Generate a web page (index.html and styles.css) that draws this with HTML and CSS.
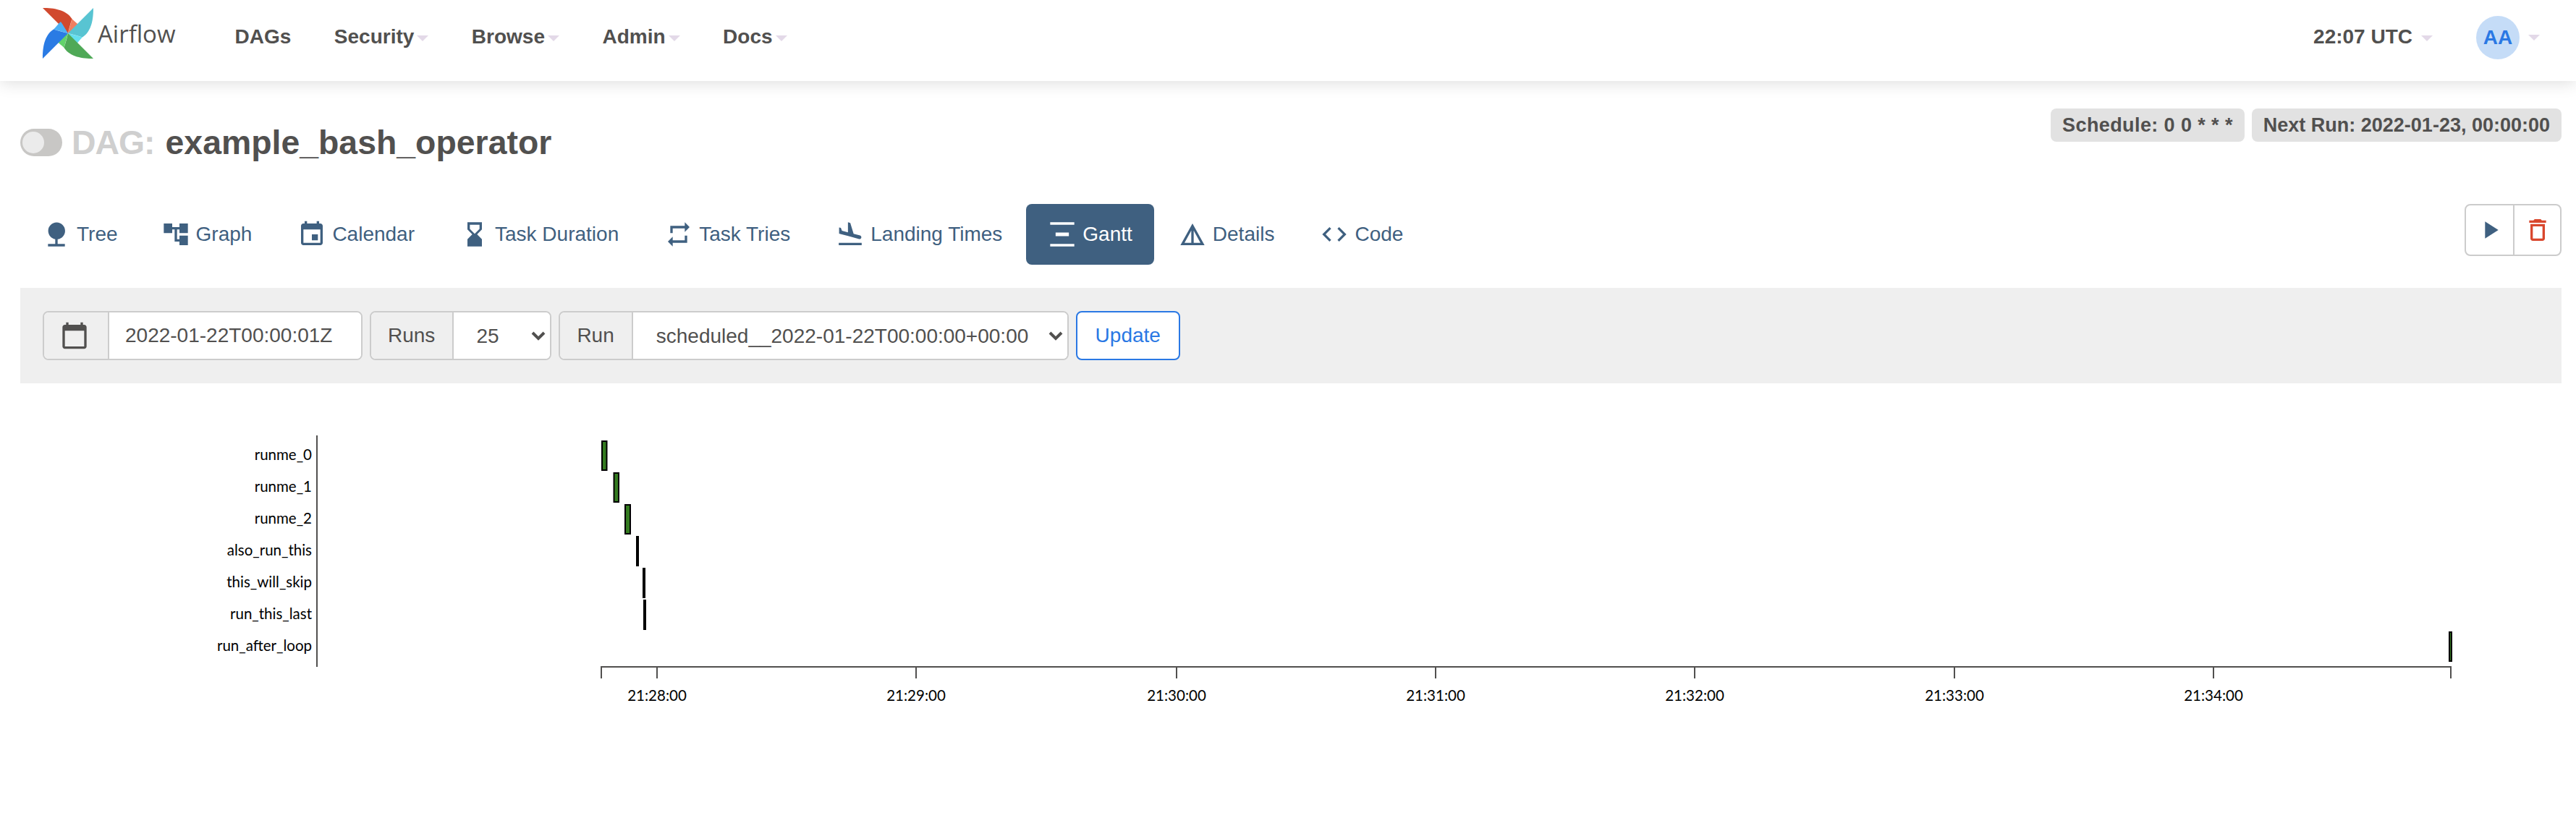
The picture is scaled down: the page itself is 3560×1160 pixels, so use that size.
FILE: index.html
```html
<!DOCTYPE html>
<html>
<head lang="en">
    <meta charset="UTF-8">
    <title>Airflow - example_bash_operator</title>
    <link rel="stylesheet" href="styles.css">
</head>
<body>
<nav class="navbar">
    <a class="brand" href="#">
        <svg class="brand-logo" viewBox="-36 -36 72 72">
            <g>
                <path fill="#f07f60" d="M5.5-20C8-17 13-14 16-10 10-6 5-3 0 0Z"/>
                <path fill="#d1492e" d="M-35-35C-20-35-3-33 5.5-20 3-12 1-5 0 0L-14-14Z"/>
            </g>
            <g transform="rotate(90)">
                <path fill="#64dfef" d="M5.5-20C8-17 13-14 16-10 10-6 5-3 0 0Z"/>
                <path fill="#58c4d2" d="M-35-35C-20-35-3-33 5.5-20 3-12 1-5 0 0L-14-14Z"/>
            </g>
            <g transform="rotate(180)">
                <path fill="#62d36b" d="M5.5-20C8-17 13-14 16-10 10-6 5-3 0 0Z"/>
                <path fill="#4fa957" d="M-35-35C-20-35-3-33 5.5-20 3-12 1-5 0 0L-14-14Z"/>
            </g>
            <g transform="rotate(270)">
                <path fill="#4db1f5" d="M5.5-20C8-17 13-14 16-10 10-6 5-3 0 0Z"/>
                <path fill="#2a7be4" d="M-35-35C-20-35-3-33 5.5-20 3-12 1-5 0 0L-14-14Z"/>
            </g>
        </svg>
        <span class="brand-name">Airflow</span>
    </a>
    <ul class="nav-menu">
        <li><a href="#">DAGs</a></li>
        <li><a href="#">Security<span class="caret"></span></a></li>
        <li><a href="#">Browse<span class="caret"></span></a></li>
        <li><a href="#">Admin<span class="caret"></span></a></li>
        <li><a href="#">Docs<span class="caret"></span></a></li>
    </ul>
    <div class="nav-right">
        <a class="clock" href="#">22:07 UTC<span class="caret"></span></a>
        <a class="user" href="#"><span class="avatar">AA</span><span class="caret"></span></a>
    </div>
</nav>

<main class="page">
    <div class="dag-header">
        <h3 class="dag-title">
            <span class="toggle"><span class="toggle-thumb"></span></span>
            <span class="dag-prefix">DAG:</span>
            <span>example_bash_operator</span>
        </h3>
        <div class="badges">
            <span class="badge badge-schedule">Schedule: 0 0 * * *</span>
            <span class="badge">Next Run: 2022-01-23, 00:00:00</span>
        </div>
    </div>

    <div class="tabs-row">
        <ul class="tabs">
            <li><a href="#"><svg class="icon" viewBox="0 0 24 24"><path d="M13 16.12c3.47-.41 6.17-3.36 6.17-6.95 0-3.87-3.13-7-7-7s-7 3.13-7 7c0 3.47 2.52 6.34 5.83 6.89V20H5v2h14v-2h-6v-3.88z"/></svg>Tree</a></li>
            <li><a href="#"><svg class="icon" viewBox="0 0 24 24"><path d="M22 11V3h-7v3H9V3H2v8h7V8h2v10h4v3h7v-8h-7v3h-2V8h2v3z"/></svg>Graph</a></li>
            <li><a href="#"><svg class="icon" viewBox="0 0 24 24"><path d="M17 12h-5v5h5v-5zM16 1v2H8V1H6v2H5c-1.11 0-1.99.9-1.99 2L3 19c0 1.1.89 2 2 2h14c1.1 0 2-.9 2-2V5c0-1.1-.9-2-2-2h-1V1h-2zm3 18H5V8h14v11z"/></svg>Calendar</a></li>
            <li><a href="#"><svg class="icon" viewBox="0 0 24 24"><path d="M18 22l-.01-6L14 12l3.99-4.01L18 2H6v6l4 4-4 3.99V22h12zM8 7.5V4h8v3.5l-4 4-4-4z"/></svg>Task Duration</a></li>
            <li><a href="#"><svg class="icon" viewBox="0 0 24 24"><path d="M7 7h10v3l4-4-4-4v3H5v6h2V7zm10 10H7v-3l-4 4 4 4v-3h12v-6h-2v4z"/></svg>Task Tries</a></li>
            <li><a href="#"><svg class="icon" viewBox="0 0 24 24"><path d="M2.5 19h19v2h-19v-2zm7.18-5.73l4.35 1.16 5.31 1.42c.8.21 1.62-.26 1.84-1.06.21-.8-.26-1.62-1.06-1.84l-5.31-1.42-2.76-9.02L10.12 2v8.28L5.15 8.95l-.93-2.32-1.45-.39v5.17l1.6.43 5.31 1.43z"/></svg>Landing Times</a></li>
            <li class="active"><a href="#"><svg class="icon" viewBox="0 0 24 24"><path d="M2 2h20v2H2zM6.500 10.500h11v3h-11zM2 20h20v2H2z"/></svg>Gantt</a></li>
            <li><a href="#"><svg class="icon" viewBox="0 0 24 24"><path d="M12 3L2 21h20L12 3zm1 5.920L18.600 19H13V8.920zm-2 0V19H5.400L11 8.920z"/></svg>Details</a></li>
            <li><a href="#"><svg class="icon" viewBox="0 0 24 24"><path d="M9.400 16.600L4.800 12l4.600-4.600L8 6l-6 6 6 6 1.400-1.400zm5.200 0l4.600-4.600-4.600-4.600L16 6l6 6-6 6-1.400-1.400z"/></svg>Code</a></li>
        </ul>
        <div class="btn-group">
            <a class="btn-square" href="#"><svg class="icon" viewBox="0 0 24 24"><path d="M8 5v14l11-7z"/></svg></a>
            <a class="btn-square btn-danger" href="#"><svg class="icon" viewBox="0 0 24 24"><path d="M6 19c0 1.100.9 2 2 2h8c1.100 0 2-.9 2-2V7H6v12zM8 9h8v10H8V9zm7.500-5l-1-1h-5l-1 1H5v2h14V4z"/></svg></a>
        </div>
    </div>

    <form class="filter-bar">
        <div class="input-group">
            <span class="addon addon-icon"><svg class="icon" viewBox="0 0 24 24"><path d="M20 3h-1V1h-2v2H7V1H5v2H4c-1.100 0-2 .9-2 2v16c0 1.100.9 2 2 2h16c1.100 0 2-.9 2-2V5c0-1.100-.9-2-2-2zm0 18H4V8h16v13z"/></svg></span>
            <input class="field date-field" type="text" value="2022-01-22T00:00:01Z">
        </div>
        <div class="input-group">
            <span class="addon">Runs</span>
            <div class="select-wrap">
                <select class="field runs-field"><option>25</option></select>
                <svg class="chevron" viewBox="0 0 20 14"><path d="M2 3l8 8 8-8" /></svg>
            </div>
        </div>
        <div class="input-group">
            <span class="addon">Run</span>
            <div class="select-wrap">
                <select class="field run-field"><option>scheduled__2022-01-22T00:00:00+00:00</option></select>
                <svg class="chevron" viewBox="0 0 20 14"><path d="M2 3l8 8 8-8" /></svg>
            </div>
        </div>
        <button class="btn-update" type="button">Update</button>
    </form>

    <svg class="gantt" width="3512" height="460">
        <g transform="translate(410,72)">
            <g class="axis">
                <path d="M0,0V320"/>
                <text x="-7" y="27" text-anchor="end" dy=".35em">runme_0</text>
                <text x="-7" y="71" text-anchor="end" dy=".35em">runme_1</text>
                <text x="-7" y="115" text-anchor="end" dy=".35em">runme_2</text>
                <text x="-7" y="159" text-anchor="end" dy=".35em">also_run_this</text>
                <text x="-7" y="203" text-anchor="end" dy=".35em">this_will_skip</text>
                <text x="-7" y="247" text-anchor="end" dy=".35em">run_this_last</text>
                <text x="-7" y="291" text-anchor="end" dy=".35em">run_after_loop</text>
            </g>
            <g class="bars">
                <rect x="394" y="8" width="6.500" height="40"/>
                <rect x="410.500" y="52" width="6.500" height="40"/>
                <rect x="426" y="96" width="7" height="40"/>
                <rect x="442" y="140" width="2" height="40"/>
                <rect x="451" y="184" width="2" height="40"/>
                <rect x="452" y="228" width="2" height="40"/>
                <rect x="2947" y="272" width="3" height="40"/>
            </g>
            <g class="axis">
                <path d="M393,336V320H2949V336"/>
                <path d="M470,320V336M828,320V336M1188,320V336M1546,320V336M1904,320V336M2263,320V336M2621,320V336"/>
                <text x="470" y="360" text-anchor="middle" dy=".35em">21:28:00</text>
                <text x="828" y="360" text-anchor="middle" dy=".35em">21:29:00</text>
                <text x="1188" y="360" text-anchor="middle" dy=".35em">21:30:00</text>
                <text x="1546" y="360" text-anchor="middle" dy=".35em">21:31:00</text>
                <text x="1904" y="360" text-anchor="middle" dy=".35em">21:32:00</text>
                <text x="2263" y="360" text-anchor="middle" dy=".35em">21:33:00</text>
                <text x="2621" y="360" text-anchor="middle" dy=".35em">21:34:00</text>
            </g>
        </g>
    </svg>
</main>
</body>
</html>
```

FILE: styles.css
```css
*{
    margin: 0;
    padding: 0;
    box-sizing: border-box;
}
ul{
    list-style: none;
}
a{
    text-decoration: none;
    color: inherit;
}
body{
    background: #fff;
    color: #51504f;
    font-family: "Liberation Sans", Arial, sans-serif;
    font-size: 28px;
}

/* top bar */
.navbar{
    display: flex;
    align-items: center;
    height: 112px;
    padding: 0 50px 10px 58px;
    background: #fff;
    box-shadow: 0 2px 22px rgba(0,0,0,.14);
}
.brand{
    display: flex;
    align-items: center;
    gap: 5px;
    margin-right: 82px;
    margin-bottom: 10px;
}
.brand-logo{
    width: 72px;
    height: 72px;
}
.brand-name{
    font-family: "Open Sans", sans-serif;
    font-size: 33px;
}
.nav-menu{
    display: flex;
    gap: 59.5px;
    font-weight: bold;
}
.caret{
    display: inline-block;
    width: 0;
    height: 0;
    margin-left: 4px;
    border-top: 8px solid #e3d9e8;
    border-left: 8px solid transparent;
    border-right: 8px solid transparent;
    vertical-align: middle;
}
.nav-right{
    display: flex;
    align-items: center;
    margin-left: auto;
    font-weight: bold;
}
.clock .caret{
    margin-left: 12px;
}
.user{
    display: flex;
    align-items: center;
    margin-left: 60px;
    margin-top: 2px;
}
.user .caret{
    margin-left: 12px;
}
.avatar{
    display: flex;
    align-items: center;
    justify-content: center;
    width: 60px;
    height: 60px;
    border-radius: 50%;
    background: #c5dcf7;
    color: #2a78e4;
}

/* page */
.page{
    padding: 0 20px 0 28px;
}
.dag-header{
    display: flex;
    justify-content: space-between;
    align-items: flex-start;
    height: 170px;
    padding-top: 38px;
}
.dag-title{
    display: flex;
    align-items: center;
    gap: 15px;
    margin-top: 20px;
    font-size: 46.4px;
    line-height: 54px;
}
.toggle{
    display: block;
    width: 58px;
    height: 38px;
    margin-right: -2px;
    padding: 4px 3px;
    border-radius: 19px;
    background: #c8c7c5;
}
.toggle-thumb{
    display: block;
    width: 30px;
    height: 30px;
    border-radius: 50%;
    background: #ebebeb;
}
.dag-prefix{
    color: #cfcfcf;
    letter-spacing: -1px;
}
.badges{
    display: flex;
    gap: 10px;
}
.badge{
    height: 46px;
    padding: 0 16px;
    border-radius: 8px;
    background: #e2e2e2;
    font-size: 27px;
    font-weight: bold;
    line-height: 46px;
}
.badge-schedule{
    letter-spacing: .4px;
}

/* tabs */
.tabs-row{
    display: flex;
    justify-content: space-between;
    align-items: flex-start;
    height: 116px;
}
.tabs{
    display: flex;
    gap: 3px;
    color: #3f6080;
}
.tabs a{
    display: flex;
    align-items: center;
    gap: 8px;
    height: 84px;
    padding: 0 30px;
    border-radius: 8px;
}
.tabs li:first-child a{
    padding-right: 27px;
}
.tabs .active a{
    background: #3f6080;
    color: #fff;
}
.icon{
    width: 40px;
    height: 40px;
    fill: currentColor;
}
.btn-group{
    display: flex;
    height: 72px;
    border: 2px solid #ccc;
    border-radius: 8px;
}
.btn-square{
    display: flex;
    align-items: center;
    justify-content: center;
    width: 65px;
    color: #3f6080;
}
.btn-danger{
    border-left: 2px solid #ccc;
    color: #d9472d;
}

/* filter */
.filter-bar{
    display: flex;
    gap: 10px;
    height: 132px;
    padding: 32px 31px;
    background: #efefef;
}
.input-group{
    display: flex;
    height: 68px;
    border: 2px solid #ccc;
    border-radius: 8px;
    background: #fff;
}
.addon{
    display: flex;
    align-items: center;
    padding: 0 24px 0 23px;
    border-right: 2px solid #ccc;
    border-radius: 6px 0 0 6px;
    background: #efefef;
}
.addon-icon{
    width: 90px;
    padding: 0 22px;
}
.field{
    height: 64px;
    border: 0;
    border-radius: 0 6px 6px 0;
    outline: 0;
    background: #fff;
    color: #51504f;
    font-family: inherit;
    font-size: 28px;
    appearance: none;
}
.date-field{
    width: 348px;
    padding: 0 22px;
}
.runs-field{
    width: 133px;
    padding: 0 31px;
}
.run-field{
    width: 600px;
    padding: 0 32px;
}
.select-wrap{
    position: relative;
}
.chevron{
    position: absolute;
    top: 25px;
    right: 6px;
    width: 20px;
    height: 14px;
    fill: none;
    stroke: #51504f;
    stroke-width: 4;
}
.btn-update{
    width: 144px;
    height: 68px;
    border: 2px solid #2a78e4;
    border-radius: 8px;
    background: #fff;
    color: #2a78e4;
    font-family: inherit;
    font-size: 28px;
}

/* gantt chart */
.gantt{
    display: block;
}
.axis path{
    fill: none;
    stroke: #51504f;
    stroke-width: 2;
}
.axis text{
    fill: #000;
    font-family: Lato, "Noto Sans", sans-serif;
    font-size: 20.5px;
}
.bars rect{
    fill: #347b20;
    stroke: #000;
    stroke-width: 2;
}
```
